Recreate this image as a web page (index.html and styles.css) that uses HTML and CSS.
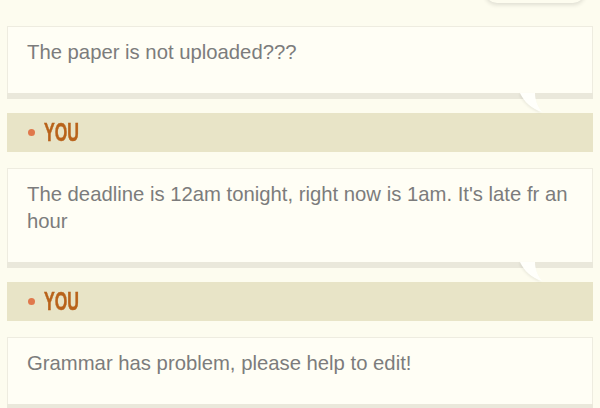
FILE: index.html
```html
<!DOCTYPE html>
<html lang="en">
<head>
  <meta charset="UTF-8">
  <meta name="viewport" content="width=device-width, initial-scale=1.0">
  <title>Messages</title>
  <link rel="stylesheet" href="styles.css">
</head>
<body>
  <div class="top-bubble"></div>
  <div class="thread">
    <div class="message">
      <div class="card">
        <p>The paper is not uploaded???</p>
      </div>
      <div class="tail">
        <svg width="26" height="20" viewBox="0 0 26 20">
          <path d="M1 0 L16 0 C16 6 18 13 23 19 C13 16 5 9 1 0 Z" fill="#fffffb"/>
        </svg>
      </div>
    </div>

    <div class="sender"><span class="dot"></span><span class="name">YOU</span></div>

    <div class="message">
      <div class="card">
        <p>The deadline is 12am tonight, right now is 1am. It's late fr an hour</p>
      </div>
      <div class="tail">
        <svg width="26" height="20" viewBox="0 0 26 20">
          <path d="M1 0 L16 0 C16 6 18 13 23 19 C13 16 5 9 1 0 Z" fill="#fffffb"/>
        </svg>
      </div>
    </div>

    <div class="sender"><span class="dot"></span><span class="name">YOU</span></div>

    <div class="message">
      <div class="card">
        <p>Grammar has problem, please help to edit!</p>
      </div>
    </div>
  </div>
</body>
</html>
```

FILE: styles.css
```css
body {
  margin: 0;
  background-color: #fdfcef;
  font-family: "Liberation Sans", Arial, sans-serif;
  overflow: hidden;
}
.top-bubble {
  width: 100px;
  height: 40px;
  margin: -37px 15px 0 auto;
  border-radius: 12px;
  background-color: #fdfcef;
  box-shadow: 0 2px 4px rgba(0, 0, 0, 0.12);
}
.thread {
  padding: 23px 7px 0 7px;
}
.message {
  position: relative;
  padding-bottom: 6px;
  margin-bottom: 14px;
}
.card {
  background-color: #fffef5;
  border: 1px solid #eeece0;
  border-bottom: none;
  box-shadow: 0 6px 0 #eae8db;
  padding: 12px 19px 27px 19px;
}
.card p {
  margin: 0;
  color: #7c7c7c;
  font-size: 20.3px;
  line-height: 27px;
}
.tail {
  position: absolute;
  right: 48px;
  bottom: -14px;
  height: 20px;
  filter: drop-shadow(-1px 1px 1px rgba(0, 0, 0, 0.07));
}
.tail svg {
  display: block;
}
.sender {
  display: flex;
  align-items: center;
  height: 39px;
  background-color: #e8e4c7;
  padding-left: 21px;
  margin-bottom: 16px;
}
.dot {
  width: 7px;
  height: 7px;
  border-radius: 50%;
  background-color: #e0784c;
  margin-right: 9px;
}
.name {
  font-family: "Liberation Sans", sans-serif;
  font-weight: bold;
  font-size: 26px;
  color: #b8621a;
  display: inline-block;
  -webkit-text-stroke: 0.5px #b8621a;
  transform: scaleX(0.62);
  transform-origin: left center;
}
```
